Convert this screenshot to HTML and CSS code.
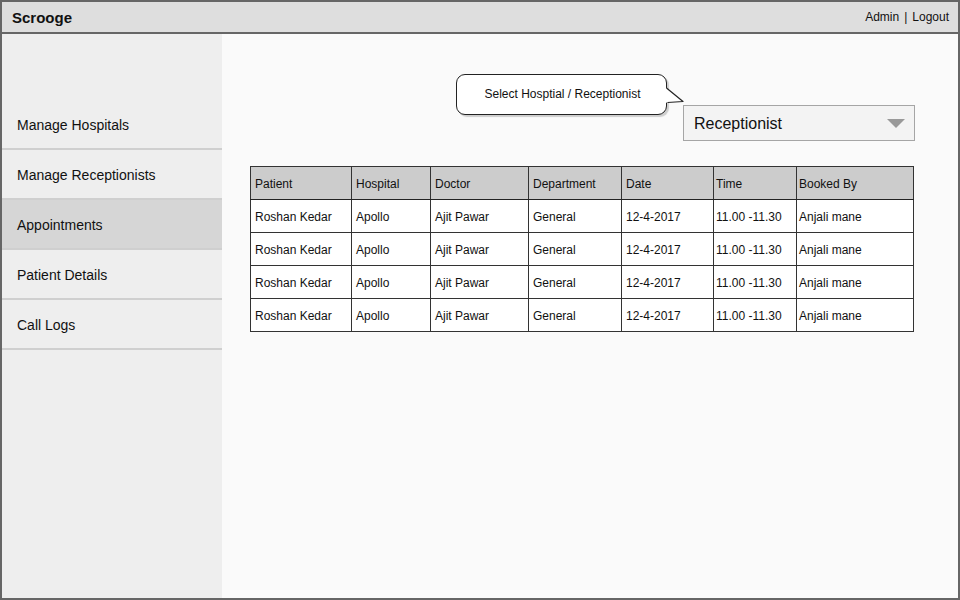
FILE: index.html
```html
<!DOCTYPE html>
<html lang="en">
<head>
    <meta charset="UTF-8">
    <meta name="viewport" content="width=device-width, initial-scale=1.0">
    <title>Scrooge - Appointments</title>
    <link rel="stylesheet" href="styles.css">
</head>
<body>
    <div class="window">
        <header class="topbar">
            <span class="brand">Scrooge</span>
            <div class="user-links">
                <a href="#">Admin</a>
                <span class="sep">|</span>
                <a href="#">Logout</a>
            </div>
        </header>

        <div class="layout">
            <nav class="sidebar">
                <a href="#" class="nav-item">Manage Hospitals</a>
                <a href="#" class="nav-item">Manage Receptionists</a>
                <a href="#" class="nav-item active">Appointments</a>
                <a href="#" class="nav-item">Patient Details</a>
                <a href="#" class="nav-item">Call Logs</a>
            </nav>

            <main class="content">
                <div class="picker">
                    <div class="callout">
                        Select Hosptial / Receptionist
                        <svg class="callout-tail" width="22" height="20" viewBox="0 0 22 20">
                            <path d="M0 0 L2.5 1 L19 14.5 L3.5 15.5 L0 16 Z" fill="#fff"/>
                            <path d="M2.5 1 L19 14.5 L3.5 15.5" fill="none" stroke="#222" stroke-width="1.2" stroke-linejoin="round"/>
                        </svg>
                    </div>
                    <div class="select">
                        <span>Receptionist</span>
                        <span class="caret"></span>
                    </div>
                </div>

                <table class="appointments">
                    <thead>
                        <tr>
                            <th class="col-patient">Patient</th>
                            <th class="col-hospital">Hospital</th>
                            <th class="col-doctor">Doctor</th>
                            <th class="col-dept">Department</th>
                            <th class="col-date">Date</th>
                            <th class="col-time">Time</th>
                            <th class="col-booked">Booked By</th>
                        </tr>
                    </thead>
                    <tbody>
                        <tr>
                            <td>Roshan Kedar</td><td>Apollo</td><td>Ajit Pawar</td><td>General</td><td>12-4-2017</td><td class="col-time">11.00 -11.30</td><td class="col-booked">Anjali mane</td>
                        </tr>
                        <tr>
                            <td>Roshan Kedar</td><td>Apollo</td><td>Ajit Pawar</td><td>General</td><td>12-4-2017</td><td class="col-time">11.00 -11.30</td><td class="col-booked">Anjali mane</td>
                        </tr>
                        <tr>
                            <td>Roshan Kedar</td><td>Apollo</td><td>Ajit Pawar</td><td>General</td><td>12-4-2017</td><td class="col-time">11.00 -11.30</td><td class="col-booked">Anjali mane</td>
                        </tr>
                        <tr>
                            <td>Roshan Kedar</td><td>Apollo</td><td>Ajit Pawar</td><td>General</td><td>12-4-2017</td><td class="col-time">11.00 -11.30</td><td class="col-booked">Anjali mane</td>
                        </tr>
                    </tbody>
                </table>
            </main>
        </div>
    </div>
</body>
</html>
```

FILE: styles.css
```css
* {
    box-sizing: border-box;
}
body {
    margin: 0;
    font-family: 'Liberation Sans', Arial, sans-serif;
    color: #111;
}
a {
    color: inherit;
    text-decoration: none;
}
.window {
    width: 960px;
    height: 600px;
    border: 2px solid #666;
    display: flex;
    flex-direction: column;
    background-color: #fafafa;
}
.topbar {
    height: 32px;
    background-color: #dedede;
    border-bottom: 2px solid #666;
    display: flex;
    align-items: center;
    justify-content: space-between;
    padding: 0 9px 0 10px;
}
.brand {
    font-weight: bold;
    font-size: 15px;
}
.user-links {
    font-size: 12px;
    display: flex;
    gap: 5px;
}
.layout {
    flex: 1;
    display: flex;
}
.sidebar {
    width: 220px;
    background-color: #eeeeee;
    padding-top: 66px;
    display: flex;
    flex-direction: column;
}
.nav-item {
    height: 50px;
    display: flex;
    align-items: center;
    padding-left: 15px;
    padding-top: 1px;
    font-size: 14px;
    border-bottom: 2px solid #cfcfcf;
}
.nav-item.active {
    background-color: #d6d6d6;
}
.content {
    flex: 1;
    padding: 40px 43px 0 28px;
}
.picker {
    display: flex;
    justify-content: flex-end;
    align-items: flex-start;
    gap: 16px;
}
.callout {
    position: relative;
    width: 211px;
    height: 41px;
    background-color: #fff;
    border: 1px solid #222;
    border-radius: 9px;
    box-shadow: 2px 2px 1px rgba(0,0,0,0.18);
    font-size: 12px;
    display: flex;
    align-items: center;
    justify-content: center;
    padding: 0 0 1px 2px;
}
.callout-tail {
    position: absolute;
    right: -20px;
    top: 12px;
}
.select {
    margin-top: 31px;
    width: 232px;
    height: 36px;
    background-color: #f3f3f3;
    border: 1px solid #a5a5a5;
    display: flex;
    align-items: center;
    justify-content: space-between;
    padding: 2px 9px 0 10px;
    font-size: 16px;
}
.caret {
    width: 0;
    height: 0;
    margin-top: -2px;
    border-left: 9px solid transparent;
    border-right: 9px solid transparent;
    border-top: 9px solid #999;
}
.appointments {
    margin-top: 25px;
    width: 664px;
    border-collapse: collapse;
    font-size: 12px;
    background-color: #fff;
    border: 1px solid #222;
}
.appointments th,
.appointments td {
    height: 33px;
    padding: 1px 4px 0 4px;
    text-align: left;
    font-weight: normal;
    border: 1px solid #333;
}
.appointments th {
    background-color: #cccccc;
    border-bottom: 1px solid #222;
}
.appointments .col-time,
.appointments .col-booked {
    padding-left: 2px;
}
.col-patient { width: 101px; }
.col-hospital { width: 79px; }
.col-doctor { width: 98px; }
.col-dept { width: 93px; }
.col-date { width: 92px; }
th.col-time { width: 83px; }
```
